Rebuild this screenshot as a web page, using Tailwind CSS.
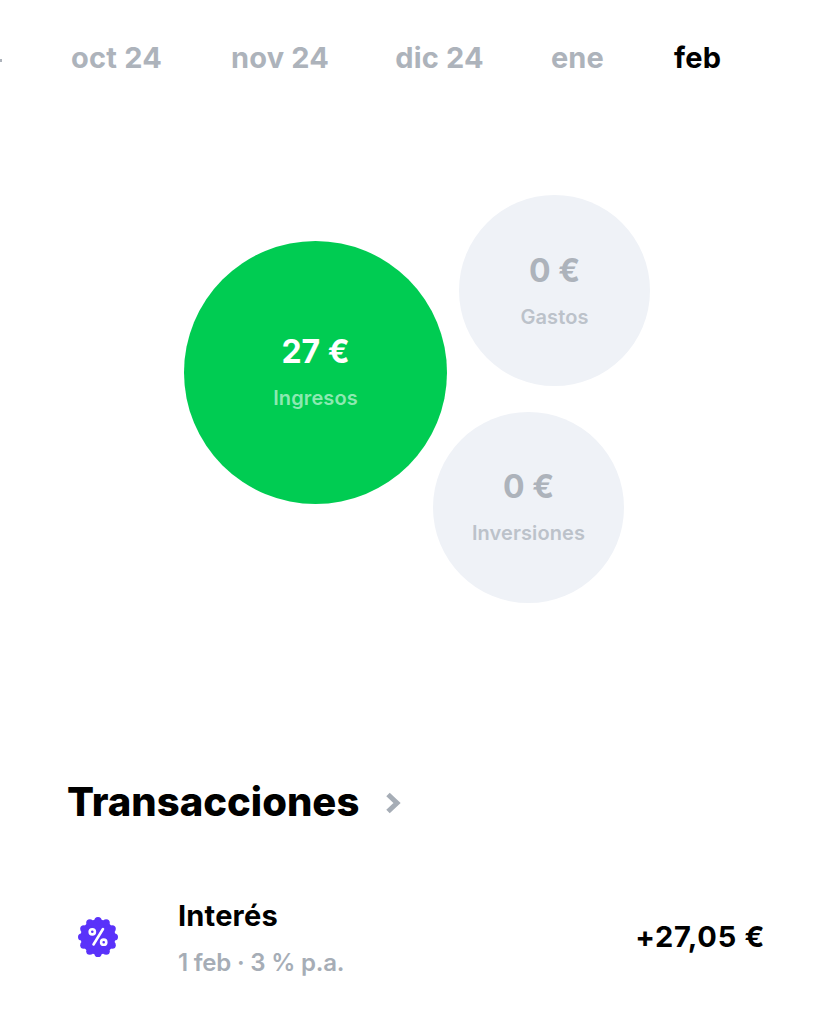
<!DOCTYPE html>
<html lang="en">
<head>
    <meta charset="UTF-8">
    <title>Transacciones</title>
    <script src="https://cdn.jsdelivr.net/npm/@tailwindcss/browser@4"></script>
</head>
<body class="bg-white font-['Inter',sans-serif] overflow-hidden">
    <div class="relative w-[833px] h-[1024px] overflow-hidden">

        <!-- Months -->
        <div class="flex items-center gap-[69px] h-[34px] mt-[41px] pl-[71px] text-[29px] leading-[34px] font-bold tracking-[0.2px] text-[#adb3bb] whitespace-nowrap">
            <span>oct 24</span>
            <span>nov 24</span>
            <span class="-ml-[3px]">dic 24</span>
            <span class="-ml-[2px]">ene</span>
            <span class="ml-[1px] text-black">feb</span>
        </div>
        <div class="absolute left-0 top-[59px] w-[2px] h-[3px] bg-[#adb3bb]"></div>

        <!-- Bubbles -->
        <div class="absolute left-[184px] top-[241px] w-[263px] h-[263px] rounded-full bg-[#00cc52] flex flex-col items-center text-center">
            <div class="mt-[91px] text-[32px] leading-[40px] font-bold text-white">27 €</div>
            <div class="mt-[13px] text-[20px] leading-[26px] font-semibold tracking-[0.1px] text-[#8ce9b1]">Ingresos</div>
        </div>
        <div class="absolute left-[459px] top-[195px] w-[191px] h-[191px] rounded-full bg-[#eff2f7] flex flex-col items-center text-center">
            <div class="mt-[56px] text-[32px] leading-[40px] font-bold text-[#adb3bb]">0 €</div>
            <div class="mt-[13px] text-[20px] leading-[26px] font-semibold tracking-[0.1px] text-[#bcc2ca]">Gastos</div>
        </div>
        <div class="absolute left-[433px] top-[412px] w-[191px] h-[191px] rounded-full bg-[#eff2f7] flex flex-col items-center text-center">
            <div class="mt-[55px] text-[32px] leading-[40px] font-bold text-[#adb3bb]">0 €</div>
            <div class="mt-[13px] text-[20px] leading-[26px] font-semibold tracking-[0.1px] text-[#bcc2ca]">Inversiones</div>
        </div>

        <!-- Transactions -->
        <div class="flex items-center gap-[26px] mt-[700px] pl-[67px] h-[54px]">
            <h2 class="text-[40px] leading-[54px] font-extrabold text-black">Transacciones</h2>
            <svg width="18" height="22" viewBox="0 0 18 22" fill="none" stroke="#a6adb6" stroke-width="5" class="mt-[2px]">
                <path d="M3 2.5 L12 11 L3 19.5"/>
            </svg>
        </div>

        <div class="flex items-center mt-[68px] pl-[78px] pr-[68px] h-[80px]">
            <svg width="40" height="40" viewBox="0 0 40 40" class="shrink-0">
                <g fill="#5a32fa">
                    <circle cx="20" cy="20" r="17.5"/>
                    <circle cx="20" cy="3.6" r="3.6"/>
                    <circle cx="28.2" cy="5.8" r="3.6"/>
                    <circle cx="34.2" cy="11.8" r="3.6"/>
                    <circle cx="36.4" cy="20" r="3.6"/>
                    <circle cx="34.2" cy="28.2" r="3.6"/>
                    <circle cx="28.2" cy="34.2" r="3.6"/>
                    <circle cx="20" cy="36.4" r="3.6"/>
                    <circle cx="11.8" cy="34.2" r="3.6"/>
                    <circle cx="5.8" cy="28.2" r="3.6"/>
                    <circle cx="3.6" cy="20" r="3.6"/>
                    <circle cx="5.8" cy="11.8" r="3.6"/>
                    <circle cx="11.8" cy="5.8" r="3.6"/>
                </g>
                <g fill="none" stroke="#fff" stroke-width="2.6">
                    <circle cx="14.3" cy="14.8" r="2.6"/>
                    <circle cx="25.7" cy="25.2" r="2.6"/>
                    <path d="M25 12 L15.5 27.5" stroke-linecap="round"/>
                </g>
            </svg>
            <div class="ml-[60px] flex-1 pt-[2px]">
                <div class="text-[29px] leading-[34px] font-bold tracking-[0.2px] text-black">Interés</div>
                <div class="mt-[15px] text-[24px] leading-[30px] font-semibold tracking-[-0.2px] text-[#a6adb6]">1 feb · 3 % p.a.</div>
            </div>
            <div class="text-[29px] leading-[34px] font-bold tracking-[0.7px] text-black">+27,05 €</div>
        </div>
    </div>
</body>
</html>
